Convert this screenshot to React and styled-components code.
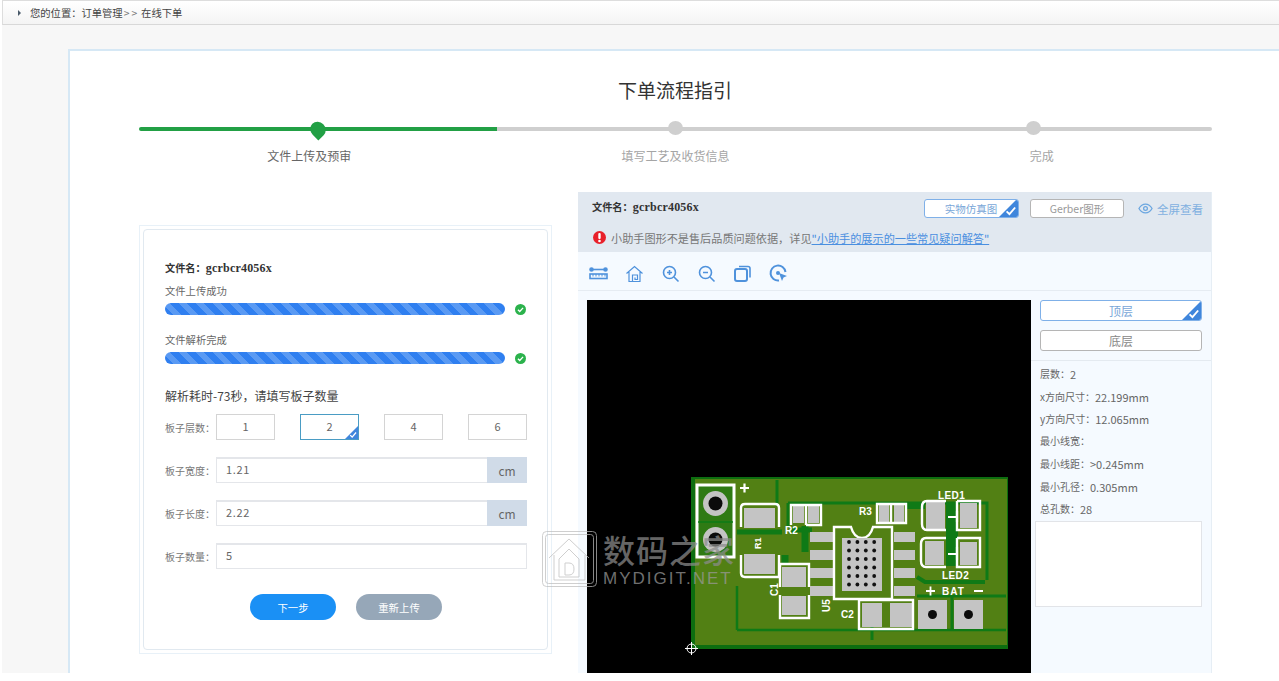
import React from 'react';
import styled, { createGlobalStyle } from 'styled-components';

const FONT = '"Noto Sans CJK SC", "Noto Sans", sans-serif';

const GlobalStyle = createGlobalStyle`
  html, body {
    margin: 0;
    padding: 0;
    height: 100%;
    overflow: hidden;
    background: #fff;
  }
  body {
    font-family: ${FONT};
    font-size: 12px;
    color: #555;
  }
  * { box-sizing: border-box; }
`;

const Page = styled.div`
  position: relative;
  width: 1279px;
  height: 673px;
  overflow: hidden;
  background: #f7f7f7;
  border-left: 2px solid #fff;
`;

const Crumb = styled.div`
  height: 25px;
  display: flex;
  align-items: center;
  padding-left: 15px;
  font-size: 10.3px;
  color: #444;
  background: linear-gradient(#fff, #f4f4f4);
  border-top: 1px solid #ddd;
  border-left: 1px solid #ddd;
  border-bottom: 1px solid #d8d8d8;
  &::before {
    content: '';
    border-left: 3px solid #4a5a6a;
    border-top: 3px solid transparent;
    border-bottom: 3px solid transparent;
    margin-right: 9px;
  }
`;

const CrumbArrows = styled.span`
  letter-spacing: 2px;
  margin: 0 2px 0 1px;
  color: #777;
`;

const Card = styled.div`
  margin: 24px 0 0 66px;
  height: 640px;
  padding: 26px 0 0 69px;
  background: #fff;
  border-top: 2px solid #d6e8f5;
  border-left: 2px solid #d6e8f5;
`;

const Title = styled.h1`
  margin: 0;
  width: 1072px;
  height: 26px;
  line-height: 26px;
  text-align: center;
  font-size: 19px;
  font-weight: 400;
  color: #333;
`;

const Steps = styled.div`
  width: 1073px;
  margin-top: 17px;
  display: grid;
  grid-template-columns: repeat(3, 1fr);
`;

const Step = styled.div`
  display: flex;
  flex-direction: column;
  align-items: center;
  position: relative;
  height: 44px;
  &::before {
    content: '';
    position: absolute;
    left: 0;
    right: 0;
    top: 7px;
    height: 4px;
    background: ${(p) => (p.$active ? '#22a045' : '#cfcfcf')};
    border-radius: ${(p) => (p.$first ? '2px 0 0 2px' : p.$last ? '0 2px 2px 0' : '0')};
  }
`;

const Dot = styled.span`
  position: relative;
  width: 15px;
  height: 15px;
  margin: 1px 0 1px;
  border-radius: 50%;
  background: #cfcfcf;
`;

const Pin = styled.span`
  position: relative;
  top: 1px;
  width: 16px;
  height: 16px;
  margin-top: 1px;
  border-radius: 50% 50% 0 50%;
  background: #22a045;
  transform: rotate(45deg);
`;

const StepLabel = styled.span`
  margin-top: 12px;
  margin-left: ${(p) => p.$shift || 0}px;
  font-size: 12px;
  line-height: 16px;
  color: ${(p) => (p.$active ? '#666' : '#a5a5a5')};
`;

const Columns = styled.div`
  display: flex;
  align-items: flex-start;
  gap: 26px;
  margin-top: 28px;
`;

const LeftOuter = styled.div`
  width: 413px;
  height: 429px;
  margin-top: 33px;
  padding: 3px;
  border: 1px solid #e8f1f8;
  flex: none;
`;

const LeftInner = styled.div`
  height: 100%;
  padding: 30px 20px 0 21px;
  border: 1px solid #e1e9f0;
  border-radius: 4px;
`;

const FileName = styled.div`
  font-family: "Liberation Serif", "Noto Serif CJK SC", "Noto Sans CJK SC", serif;
  font-size: 12px;
  line-height: 16px;
  font-weight: 700;
  color: #333;
  letter-spacing: 0.2px;
  span { font-family: ${FONT}; font-size: 10.2px; letter-spacing: 0; }
`;

const HeadName = styled(FileName)`
  margin-bottom: 4px;
`;

const BarLabel = styled.div`
  font-size: 10.3px;
  line-height: 14px;
  color: #666;
  margin-top: ${(p) => p.$top}px;
`;

const BarRow = styled.div`
  display: flex;
  align-items: center;
  gap: 10px;
  margin-top: 5px;
`;

const Bar = styled.div`
  width: 340px;
  height: 12px;
  border-radius: 6px;
  background: repeating-linear-gradient(45deg, #2f7ff0 0 6px, #5a9af3 6px 12px);
`;

const Check = styled.svg`
  width: 11px;
  height: 11px;
  flex: none;
`;

const Heading = styled.div`
  margin-top: 23px;
  font-size: 12px;
  line-height: 18px;
  color: #444;
`;

const LayerRow = styled.div`
  display: flex;
  align-items: center;
  margin-top: 9px;
`;

const FieldLabel = styled.span`
  width: 51px;
  flex: none;
  font-size: 10px;
  color: #777;
`;

const LayerOptions = styled.div`
  flex: 1;
  display: flex;
  justify-content: space-between;
`;

const LayerOption = styled.div`
  position: relative;
  width: 59px;
  height: 26px;
  display: flex;
  align-items: center;
  justify-content: center;
  padding-bottom: 2px;
  font-size: 11px;
  color: #666;
  border: 1px solid ${(p) => (p.$on ? '#4a9cc4' : '#d4d4d4')};
  background: #fff;
`;

const Corner = styled.svg`
  position: absolute;
  right: 0;
  bottom: 0;
  width: ${(p) => p.$size}px;
  height: ${(p) => p.$size}px;
`;

const FieldRow = styled.div`
  display: flex;
  align-items: center;
  margin-top: 17px;
`;

const InputBox = styled.div`
  flex: 1;
  height: 26px;
  display: flex;
  align-items: stretch;
  border: 1px solid #e4e6ea;
  border-top-width: 2px;
  background: #fff;
  font-size: 11px;
  color: #666;
`;

const InputValue = styled.span`
  flex: 1;
  padding-left: 9px;
  line-height: 20px;
  letter-spacing: 0.7px;
`;

const Unit = styled.span`
  width: 40px;
  margin: -2px -1px -1px 0;
  display: flex;
  align-items: center;
  justify-content: center;
  background: #d0dbe8;
  font-size: 12px;
  color: #666;
`;

const Buttons = styled.div`
  display: flex;
  justify-content: center;
  gap: 20px;
  margin-top: 25px;
`;

const PillButton = styled.button`
  width: 86px;
  height: 26px;
  border: 0;
  border-radius: 13px;
  background: ${(p) => (p.$primary ? '#1a90f5' : '#96a7b8')};
  color: #fff;
  font-family: ${FONT};
  font-size: 10.4px;
  padding: 0;
`;

const RightPanel = styled.div`
  width: 634px;
  flex: none;
  background: #f5faff;
  border-right: 1px solid #e6eef5;
  height: 490px;
`;

const PanelHead = styled.div`
  height: 60px;
  padding: 7px 8px 0 14px;
  background: #e1e8f0;
`;

const HeadRow = styled.div`
  display: flex;
  align-items: center;
  height: 19px;
`;

const Spacer = styled.div`
  flex: 1;
`;

const ViewButton = styled.div`
  position: relative;
  width: ${(p) => p.$w}px;
  height: 19px;
  margin-right: ${(p) => p.$mr}px;
  display: flex;
  align-items: center;
  justify-content: center;
  padding-right: ${(p) => p.$pr || 0}px;
  font-size: 10.5px;
  color: ${(p) => (p.$on ? '#7aa7d8' : '#9a9a9a')};
  background: #fff;
  border: 1px solid ${(p) => (p.$on ? '#7fb0e8' : '#b5b5b5')};
  border-radius: 3px;
  overflow: hidden;
`;

const FullScreen = styled.div`
  display: flex;
  align-items: center;
  gap: 4px;
  font-size: 11.5px;
  color: #7fb0e0;
`;

const Notice = styled.div`
  display: flex;
  align-items: center;
  gap: 4px;
  margin-top: 11px;
  height: 17px;
  font-size: 11.15px;
  color: #777;
`;

const NoticeLink = styled.span`
  color: #4a8fe0;
  text-decoration: underline;
`;

const Tools = styled.div`
  height: 39px;
  display: flex;
  align-items: center;
  padding: 4px 0 0 11px;
  gap: 17px;
  border-bottom: 1px solid #e6ecf2;
`;

const ToolIcon = styled.svg`
  width: 19px;
  height: 19px;
  flex: none;
  fill: none;
  stroke: #4f92dc;
  stroke-width: 1.6;
`;

const Viewer = styled.div`
  display: flex;
  height: 390px;
  padding: 9px 0 0 9px;
`;

const Board = styled.div`
  width: 444px;
  height: 373px;
  flex: none;
  background: #000;
  svg { display: block; }
`;

const Side = styled.div`
  flex: 1;
  display: flex;
  flex-direction: column;
`;

const LayerButtons = styled.div`
  display: flex;
  flex-direction: column;
  gap: 9px;
  padding: 0 9px 9px 9px;
  border-bottom: 1px solid #e4eaf0;
`;

const LayerButton = styled.div`
  position: relative;
  height: 21px;
  display: flex;
  align-items: center;
  justify-content: center;
  font-size: 12px;
  color: ${(p) => (p.$on ? '#7aa7d8' : '#888')};
  background: #fff;
  border: 1px solid ${(p) => (p.$on ? '#7fb0e8' : '#b5b5b5')};
  border-radius: 3px;
  overflow: hidden;
`;

const Specs = styled.div`
  padding: 1px 0 0 9px;
`;

const Spec = styled.div`
  height: 22.5px;
  line-height: 22px;
  font-size: 10px;
  color: #666;
  span {
    font-size: 11px;
    position: relative;
    top: 1px;
  }
`;

const NoteBox = styled.div`
  width: 167px;
  height: 86px;
  margin: 1px 0 0 -5px;
  background: #fff;
  border: 1px solid #e2e4e8;
`;

const Watermark = styled.div`
  position: absolute;
  left: 540px;
  top: 531px;
  display: flex;
  gap: 6px;
  opacity: 0.72;
  pointer-events: none;
`;

const WatermarkText = styled.div`
  display: flex;
  flex-direction: column;
  color: #9a9a9a;
`;

const WatermarkCn = styled.span`
  font-size: 32px;
  height: 38px;
  line-height: 36px;
  letter-spacing: 1px;
  font-weight: 500;
  color: #8c8c8c;
`;

const WatermarkEn = styled.span`
  font-family: "Liberation Sans", sans-serif;
  font-size: 17px;
  line-height: 20px;
  letter-spacing: 2px;
`;

const CheckIcon = () => (
  <Check viewBox="0 0 12 12">
    <circle cx="6" cy="6" r="6" fill="#2bb24c" />
    <path d="M3.2 6.2l2 2 3.6-4" fill="none" stroke="#fff" strokeWidth="1.4" />
  </Check>
);

const CornerMark = ({ size }) => (
  <Corner $size={size} viewBox="0 0 20 20">
    <path d="M20 0V20H0Z" fill="#3f86dc" />
    <path d="M8 14l3 3 6-7" fill="none" stroke="#fff" strokeWidth="2" />
  </Corner>
);

const pad = (x, y, w, h) => <rect x={x} y={y} width={w} height={h} fill="#c4c4c4" />;

// silkscreen outline
const Silk = ({ d }) => <path d={d} fill="none" stroke="#fff" strokeWidth="2.4" />;

const vias = [];
for (let r = 0; r < 6; r += 1) {
  for (let c = 0; c < 4; c += 1) {
    vias.push(<circle key={`${r}-${c}`} cx={849 + c * 8.4} cy={542 + r * 8.5} r="1.9" fill="#111" />);
  }
}

// drawn in page coordinates, the viewBox starts where the board panel starts
const PcbDrawing = () => (
  <svg width="444" height="373" viewBox="587 300 444 373">
    <rect x="587" y="300" width="444" height="373" fill="#000" />
    <rect x="691" y="477" width="317" height="172" fill="#0d6e10" />
    <rect x="695" y="479" width="312" height="166" fill="#528014" />
    {/* copper tracks */}
    <g fill="none" stroke="#0f7a16" strokeWidth="3">
      <path d="M777 480V506" />
      <path d="M737 630H1006" strokeWidth="2.5" />
      <path d="M737 630V586" strokeWidth="2.5" />
      <path d="M788 503H987V580" />
      <path d="M788 503V528" strokeWidth="3" />
      <path d="M805 526V552" strokeWidth="7" />
      <path d="M917 596H1006" />
      <path d="M917 577L925 582H985" strokeWidth="4" />
      <path d="M906 506H925" strokeWidth="6" />
      <path d="M737 532H782" strokeWidth="5" />
      <path d="M790 530H812" strokeWidth="5" />
      <path d="M952 503V566" strokeWidth="12" />
      <path d="M952 596V630" />
      <path d="M872 640V616" />
      <path d="M785 555V565" strokeWidth="7" />
    </g>
    {/* header + */}
    <rect x="697" y="485" width="37" height="72" fill="#2f7a14" stroke="#fff" strokeWidth="3" />
    <path d="M698 522H733" stroke="#0d7d16" strokeWidth="1.500" />
    <circle cx="715.500" cy="503.500" r="12.500" fill="#c4c4c4" />
    <circle cx="715.500" cy="503.500" r="7" fill="#0b0b0b" />
    <circle cx="715.500" cy="539.500" r="12.500" fill="#c4c4c4" />
    <circle cx="715.500" cy="539.500" r="7" fill="#0b0b0b" />
    <path d="M740 488h9M744.500 483.500v9" stroke="#fff" strokeWidth="2.200" />
    {/* R1 */}
    {pad(744, 508, 31, 20)}
    <Silk d="M741 527V508q0-4 4-4h30q4 0 4 4v19" />
    {pad(744, 554, 31, 20)}
    <Silk d="M741 555V573q0 4 4 4h34V555" />
    {/* C1 */}
    {pad(782, 567, 24, 20)}
    {pad(782, 596, 24, 19)}
    <Silk d="M780 587V564H809V587M780 595V618H809V595" />
    {/* R2 */}
    {pad(793, 506, 11, 17)}
    {pad(808, 506, 11, 17)}
    <Silk d="M791 525V505H806V525M806 505H821V525H806" />
    {/* U5 pads */}
    {pad(810, 532, 23, 10)}
    {pad(810, 550, 23, 10)}
    {pad(810, 568, 23, 10)}
    {pad(810, 586, 23, 10)}
    {pad(894, 532, 21, 10)}
    {pad(894, 550, 21, 10)}
    {pad(894, 568, 21, 10)}
    {pad(894, 586, 21, 10)}
    <Silk d="M834 527V599H892V527H873q-3 11-11 11t-11-11Z" />
    <rect x="842" y="538" width="40" height="53" fill="#c4c4c4" />
    {vias}
    {/* R3 */}
    {pad(879, 505, 10, 17)}
    {pad(894, 505, 10, 17)}
    <Silk d="M877 523V504H891V523ZM892 504H906V523H892" />
    {/* C2 */}
    {pad(862, 603, 20, 24)}
    {pad(890, 603, 22, 24)}
    <Silk d="M859 600V629H913V600H859" />
    {/* LEDs */}
    {pad(926, 502, 19, 27)}
    {pad(960, 503, 17, 25)}
    <Silk d="M946 501H927q-5 0-5 6v17q0 6 5 6h19M957 501H980V530H957V501" />
    <path d="M948 517h9M957 511v11" stroke="#fff" strokeWidth="2.200" />
    {pad(925, 541, 19, 24)}
    {pad(960, 542, 17, 23)}
    <Silk d="M946 538H926q-5 0-5 6v17q0 6 5 6h20M957 538H980V567H957V538" />
    <path d="M948 554h9M957 547v13" stroke="#fff" strokeWidth="2.200" />
    {/* BAT pads */}
    {pad(918, 600, 29, 29)}
    <circle cx="932.500" cy="614.500" r="4.500" fill="#0b0b0b" />
    {pad(954, 600, 29, 29)}
    <circle cx="968.500" cy="614.500" r="4.500" fill="#0b0b0b" />
    <g fill="#fff" fontFamily='"Liberation Sans", sans-serif' fontWeight="700" fontSize="10">
      <text x="938" y="499" letterSpacing="0.4">LED1</text>
      <text x="942" y="579" letterSpacing="0.4">LED2</text>
      <text x="942" y="595" letterSpacing="1">BAT</text>
      <text x="785" y="534">R2</text>
      <text x="859" y="515">R3</text>
      <text x="841" y="618">C2</text>
      <text transform="translate(761 549) rotate(-90)" fontSize="9">R1</text>
      <text transform="translate(778 596) rotate(-90)">C1</text>
      <text transform="translate(830 612) rotate(-90)">U5</text>
    </g>
    <path d="M926 591h9M930.500 586.500v9M974 591h9" stroke="#fff" strokeWidth="1.800" />
    <g fill="none" stroke="#fff" strokeWidth="1">
      <circle cx="691.500" cy="648.500" r="4.500" />
      <path d="M685 648.500h13M691.500 642v13" />
    </g>
  </svg>
);

export default function App() {
  return (
    <>
      <GlobalStyle />
      <Page>
        <Crumb>您的位置：订单管理<CrumbArrows>&gt;&gt;</CrumbArrows> 在线下单</Crumb>
        <Card>
          <Title>下单流程指引</Title>
          <Steps>
            <Step $active $first>
              <Pin />
              <StepLabel $active $shift={-17}>文件上传及预审</StepLabel>
            </Step>
            <Step>
              <Dot />
              <StepLabel>填写工艺及收货信息</StepLabel>
            </Step>
            <Step $last>
              <Dot />
              <StepLabel $shift={17}>完成</StepLabel>
            </Step>
          </Steps>
          <Columns>
            <LeftOuter>
              <LeftInner>
                <FileName><span>文件名：</span>gcrbcr4056x</FileName>
                <BarLabel $top={8}>文件上传成功</BarLabel>
                <BarRow><Bar /><CheckIcon /></BarRow>
                <BarLabel $top={18}>文件解析完成</BarLabel>
                <BarRow><Bar /><CheckIcon /></BarRow>
                <Heading>解析耗时-73秒，请填写板子数量</Heading>
                <LayerRow>
                  <FieldLabel>板子层数：</FieldLabel>
                  <LayerOptions>
                    <LayerOption>1</LayerOption>
                    <LayerOption $on>2<CornerMark size={13} /></LayerOption>
                    <LayerOption>4</LayerOption>
                    <LayerOption>6</LayerOption>
                  </LayerOptions>
                </LayerRow>
                <FieldRow>
                  <FieldLabel>板子宽度：</FieldLabel>
                  <InputBox><InputValue>1.21</InputValue><Unit>cm</Unit></InputBox>
                </FieldRow>
                <FieldRow>
                  <FieldLabel>板子长度：</FieldLabel>
                  <InputBox><InputValue>2.22</InputValue><Unit>cm</Unit></InputBox>
                </FieldRow>
                <FieldRow>
                  <FieldLabel>板子数量：</FieldLabel>
                  <InputBox><InputValue>5</InputValue></InputBox>
                </FieldRow>
                <Buttons>
                  <PillButton $primary>下一步</PillButton>
                  <PillButton>重新上传</PillButton>
                </Buttons>
              </LeftInner>
            </LeftOuter>
            <RightPanel>
              <PanelHead>
                <HeadRow>
                  <HeadName><span>文件名：</span>gcrbcr4056x</HeadName>
                  <Spacer />
                  <ViewButton $on $w={95} $mr={11} $pr={1}>实物仿真图<CornerMark size={19} /></ViewButton>
                  <ViewButton $w={94} $mr={14}>Gerber图形</ViewButton>
                  <FullScreen>
                    <svg width="15" height="15" viewBox="0 0 24 24" fill="none" stroke="#6aa6e0" strokeWidth="2">
                      <path d="M1.500 12S5.500 5 12 5s10.500 7 10.500 7-4 7-10.500 7S1.500 12 1.500 12Z" />
                      <circle cx="12" cy="12" r="3" />
                    </svg>
                    全屏查看
                  </FullScreen>
                </HeadRow>
                <Notice>
                  <svg width="15" height="15" viewBox="0 0 15 15">
                    <circle cx="7.500" cy="7.500" r="6.500" fill="#e8202a" />
                    <rect x="6.300" y="3" width="2.400" height="6" rx="1" fill="#fff" />
                    <circle cx="7.500" cy="11" r="1.300" fill="#fff" />
                  </svg>
                  <span>小助手图形不是售后品质问题依据，详见<NoticeLink>"小助手的展示的一些常见疑问解答"</NoticeLink></span>
                </Notice>
              </PanelHead>
              <Tools>
                <ToolIcon viewBox="0 0 19 19">
                  <path d="M2 5.500H17" />
                  <circle cx="2.500" cy="5.500" r="1.500" fill="#4f92dc" />
                  <circle cx="16.500" cy="5.500" r="1.500" fill="#4f92dc" />
                  <rect x="1" y="10" width="17" height="4.500" />
                  <path d="M4 10v2.500M7 10v2.500M10 10v2.500M13 10v2.500M16 10v2.500" strokeWidth="1" />
                </ToolIcon>
                <ToolIcon viewBox="0 0 19 19">
                  <path d="M1.500 9.500l8-7 8 7M4 8v9.500h11V8M7.500 17.500v-6.500h5v4.500h-2.500v-2" strokeWidth="1.200" />
                </ToolIcon>
                <ToolIcon viewBox="0 0 19 19">
                  <circle cx="8.500" cy="8.500" r="6" />
                  <path d="M13 13l4.500 4.500M6 8.500h5M8.500 6v5" />
                </ToolIcon>
                <ToolIcon viewBox="0 0 19 19">
                  <circle cx="8.500" cy="8.500" r="6" />
                  <path d="M13 13l4.500 4.500M6 8.500h5" />
                </ToolIcon>
                <ToolIcon viewBox="0 0 19 19">
                  <rect x="2" y="5" width="12" height="12" rx="2" strokeWidth="2" />
                  <path d="M6 2.500h9q2 0 2 2v9" />
                </ToolIcon>
                <ToolIcon viewBox="0 0 19 19">
                  <path d="M10 16.500A7.500 7.500 0 1 1 16.500 8" strokeWidth="2" />
                  <circle cx="9" cy="9" r="2" fill="#4f92dc" stroke="none" />
                  <path d="M10 9l8 3-3.500 1.500L13 17Z" fill="#4f92dc" stroke="none" />
                </ToolIcon>
              </Tools>
              <Viewer>
                <Board><PcbDrawing /></Board>
                <Side>
                  <LayerButtons>
                    <LayerButton $on>顶层<CornerMark size={19} /></LayerButton>
                    <LayerButton>底层</LayerButton>
                  </LayerButtons>
                  <Specs>
                    <Spec>层数：<span>2</span></Spec>
                    <Spec>x方向尺寸：<span>22.199mm</span></Spec>
                    <Spec>y方向尺寸：<span>12.065mm</span></Spec>
                    <Spec>最小线宽：</Spec>
                    <Spec>最小线距：<span>&gt;0.245mm</span></Spec>
                    <Spec>最小孔径：<span>0.305mm</span></Spec>
                    <Spec>总孔数：<span>28</span></Spec>
                    <NoteBox />
                  </Specs>
                </Side>
              </Viewer>
            </RightPanel>
          </Columns>
        </Card>
        <Watermark>
          <svg width="55" height="56" viewBox="0 0 55 56" fill="none" stroke="#bdbdbd" strokeWidth="1">
            <rect x="0.500" y="0.500" width="54" height="55" rx="4" />
            <rect x="3.500" y="3.500" width="48" height="49" rx="3" />
            <path d="M7 27L27 8l20 19M12 24v25h31V24" />
            <path d="M17 28L27 18l10 10v18H17Z" />
            <path d="M23 32h4q5 0 5 6t-5 6h-4Z" />
          </svg>
          <WatermarkText>
            <WatermarkCn>数码之家</WatermarkCn>
            <WatermarkEn>MYDIGIT.NET</WatermarkEn>
          </WatermarkText>
        </Watermark>
      </Page>
    </>
  );
}
